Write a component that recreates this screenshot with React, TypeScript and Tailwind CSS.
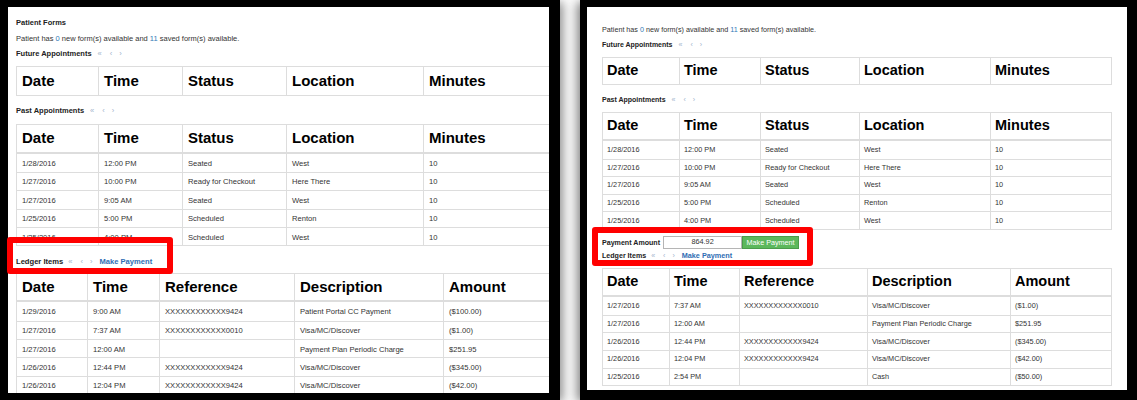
import React from "react";

type TableProps = {
  cols: string[];
  grid: string;
  rows: string[][];
  headH: string;
  rowH: string;
  headText: string;
  cellText: string;
  pad: string;
  width: string;
};

function DataTable({ cols, grid, rows, headH, rowH, headText, cellText, pad, width }: TableProps) {
  return (
    <div className={`${width} border border-[#dddddd] bg-white`}>
      <div className={`grid ${grid} ${headH} ${rows.length > 0 ? "border-b-2 border-[#dddddd]" : ""}`}>
        {cols.map((c, i) => (
          <div
            key={c}
            className={`flex items-center ${pad} ${headText} font-bold text-black ${i > 0 ? "border-l border-[#dddddd]" : ""}`}
          >
            {c}
          </div>
        ))}
      </div>
      {rows.map((r, ri) => (
        <div
          key={ri}
          className={`grid ${grid} ${rowH} ${ri > 0 ? "border-t border-[#dddddd]" : ""}`}
        >
          {r.map((v, i) => (
            <div
              key={i}
              className={`flex items-center pt-[1px] ${pad} ${cellText} text-[#333333] whitespace-nowrap ${i > 0 ? "border-l border-[#dddddd]" : ""}`}
            >
              {v}
            </div>
          ))}
        </div>
      ))}
    </div>
  );
}

function Pager({ cls }: { cls: string }) {
  return (
    <span className={`inline-flex items-center text-[#9fb4cc] ${cls}`}>
      <span>«</span>
      <span className="ml-[8px]">‹</span>
      <span className="ml-[7px]">›</span>
    </span>
  );
}

const apptCols = ["Date", "Time", "Status", "Location", "Minutes"];
const ledgerCols = ["Date", "Time", "Reference", "Description", "Amount"];

const pastRows = [
  ["1/28/2016", "12:00 PM", "Seated", "West", "10"],
  ["1/27/2016", "10:00 PM", "Ready for Checkout", "Here There", "10"],
  ["1/27/2016", "9:05 AM", "Seated", "West", "10"],
  ["1/25/2016", "5:00 PM", "Scheduled", "Renton", "10"],
  ["1/25/2016", "4:00 PM", "Scheduled", "West", "10"],
];

const ledgerLeft = [
  ["1/29/2016", "9:00 AM", "XXXXXXXXXXXX9424", "Patient Portal CC Payment", "($100.00)"],
  ["1/27/2016", "7:37 AM", "XXXXXXXXXXXX0010", "Visa/MC/Discover", "($1.00)"],
  ["1/27/2016", "12:00 AM", "", "Payment Plan Periodic Charge", "$251.95"],
  ["1/26/2016", "12:44 PM", "XXXXXXXXXXXX9424", "Visa/MC/Discover", "($345.00)"],
  ["1/26/2016", "12:04 PM", "XXXXXXXXXXXX9424", "Visa/MC/Discover", "($42.00)"],
];

const ledgerRight = [
  ["1/27/2016", "7:37 AM", "XXXXXXXXXXXX0010", "Visa/MC/Discover", "($1.00)"],
  ["1/27/2016", "12:00 AM", "", "Payment Plan Periodic Charge", "$251.95"],
  ["1/26/2016", "12:44 PM", "XXXXXXXXXXXX9424", "Visa/MC/Discover", "($345.00)"],
  ["1/26/2016", "12:04 PM", "XXXXXXXXXXXX9424", "Visa/MC/Discover", "($42.00)"],
  ["1/25/2016", "2:54 PM", "", "Cash", "($50.00)"],
];

export default function App() {
  return (
    <div className="relative w-[1137px] h-[400px] bg-white overflow-hidden font-['Liberation_Sans',Arial,sans-serif]">
      <div className="flex">
        {/* Left screenshot */}
        <div className="w-[560px] h-[400px] shrink-0 border-l-[8px] border-t-[7px] border-r-[11px] border-b-[7px] border-black bg-white overflow-hidden shadow-[3px_2px_10px_rgba(0,0,0,0.45)]">
          <div className="pl-[8px] pt-[10px] flex flex-col">
            <div className="h-[12px] flex items-center text-[7.5px] font-bold text-[#222]">Patient Forms</div>
            <div className="mt-[4px] h-[12px] flex items-center text-[7.5px] text-[#333]">
              Patient has&nbsp;<span className="text-[#337ab7]">0</span>&nbsp;new form(s) available and&nbsp;
              <span className="text-[#337ab7]">11</span>&nbsp;saved form(s) available.
            </div>
            <div className="mt-[3px] h-[12px] flex items-center text-[7.5px] font-bold text-[#222]">
              Future Appointments
              <Pager cls="ml-[6px] text-[7.5px] font-normal" />
            </div>
            <div className="mt-[6px]">
              <DataTable
                cols={apptCols}
                grid="grid-cols-[81px_84px_104px_137px_127px]"
                rows={[]}
                headH="h-[28px]"
                rowH="h-[18.3px]"
                headText="text-[15px]"
                cellText="text-[7.6px]"
                pad="px-[5px]"
                width="w-[534px]"
              />
            </div>
            <div className="mt-[9px] h-[12px] flex items-center text-[7.5px] font-bold text-[#222]">
              Past Appointments
              <Pager cls="ml-[6px] text-[7.5px] font-normal" />
            </div>
            <div className="mt-[7px]">
              <DataTable
                cols={apptCols}
                grid="grid-cols-[81px_84px_104px_137px_127px]"
                rows={pastRows}
                headH="h-[28.5px]"
                rowH="h-[18.4px]"
                headText="text-[15px]"
                cellText="text-[7.6px]"
                pad="px-[5px]"
                width="w-[534px]"
              />
            </div>
            <div className="mt-[9px] h-[12px] flex items-center text-[7.6px] font-bold text-[#222]">
              Ledger Items
              <Pager cls="ml-[5px] text-[7.5px] font-normal" />
              <span className="ml-[7px] text-[#2f6db3]">Make Payment</span>
            </div>
            <div className="mt-[6px]">
              <DataTable
                cols={ledgerCols}
                grid="grid-cols-[70px_72px_135px_149px_108px]"
                rows={ledgerLeft}
                headH="h-[28px]"
                rowH="h-[18.3px]"
                headText="text-[15px]"
                cellText="text-[7.6px]"
                pad="px-[5px]"
                width="w-[534px]"
              />
            </div>
          </div>
        </div>

        {/* Right screenshot */}
        <div className="ml-[20px] w-[557px] h-[400px] shrink-0 border-l-[7px] border-t-[7px] border-r-[10px] border-b-[10px] border-black bg-white overflow-hidden shadow-[-3px_2px_10px_rgba(0,0,0,0.5)]">
          <div className="pl-[15px] pt-[17px] flex flex-col">
            <div className="h-[12px] flex items-center text-[7.2px] text-[#333]">
              Patient has&nbsp;<span className="text-[#337ab7]">0</span>&nbsp;new form(s) available and&nbsp;
              <span className="text-[#337ab7]">11</span>&nbsp;saved form(s) available.
            </div>
            <div className="mt-[3px] h-[12px] flex items-center text-[7px] font-bold text-[#222]">
              Future Appointments
              <Pager cls="ml-[6px] text-[7px] font-normal" />
            </div>
            <div className="mt-[5.7px]">
              <DataTable
                cols={apptCols}
                grid="grid-cols-[76px_81px_99px_131px_123px]"
                rows={[]}
                headH="h-[26.3px]"
                rowH="h-[17.6px]"
                headText="text-[14.5px]"
                cellText="text-[7.3px]"
                pad="px-[4px]"
                width="w-[510px]"
              />
            </div>
            <div className="mt-[9px] h-[12px] flex items-center text-[7px] font-bold text-[#222]">
              Past Appointments
              <Pager cls="ml-[6px] text-[7px] font-normal" />
            </div>
            <div className="mt-[5.7px]">
              <DataTable
                cols={apptCols}
                grid="grid-cols-[76px_81px_99px_131px_123px]"
                rows={pastRows}
                headH="h-[28.3px]"
                rowH="h-[17.6px]"
                headText="text-[14.5px]"
                cellText="text-[7.3px]"
                pad="px-[4px]"
                width="w-[510px]"
              />
            </div>
            <div className="mt-[6px] h-[14px] flex items-center text-[7.1px] text-[#222]">
              <span className="font-bold">Payment Amount</span>
              <div className="ml-[3px] w-[79px] h-[13px] border border-[#b5b5b5] flex items-center justify-center text-[7.3px] text-[#333]">
                864.92
              </div>
              <div className="w-[57px] h-[13px] bg-[#5cb85c] border border-[#4a9c4a] flex items-center justify-center text-[7.2px] text-white">
                Make Payment
              </div>
            </div>
            <div className="h-[12px] flex items-center text-[7.1px] font-bold text-[#222]">
              Ledger Items
              <Pager cls="ml-[5px] text-[7px] font-normal" />
              <span className="ml-[7px] text-[7.25px] text-[#2f6db3]">Make Payment</span>
            </div>
            <div className="mt-[6.3px]">
              <DataTable
                cols={ledgerCols}
                grid="grid-cols-[66px_70px_128px_143px_103px]"
                rows={ledgerRight}
                headH="h-[27.7px]"
                rowH="h-[17.7px]"
                headText="text-[14.5px]"
                cellText="text-[7.3px]"
                pad="px-[4px]"
                width="w-[510px]"
              />
            </div>
          </div>
        </div>
      </div>

      {/* Red annotation boxes */}
      <div className="absolute left-[7px] top-[237px] w-[166px] h-[37px] border-[6px] border-[#ff0000] rounded-[3px]" />
      <div className="absolute left-[592px] top-[227px] w-[221px] h-[39px] border-[6px] border-[#ff0000] rounded-[3px]" />
    </div>
  );
}
